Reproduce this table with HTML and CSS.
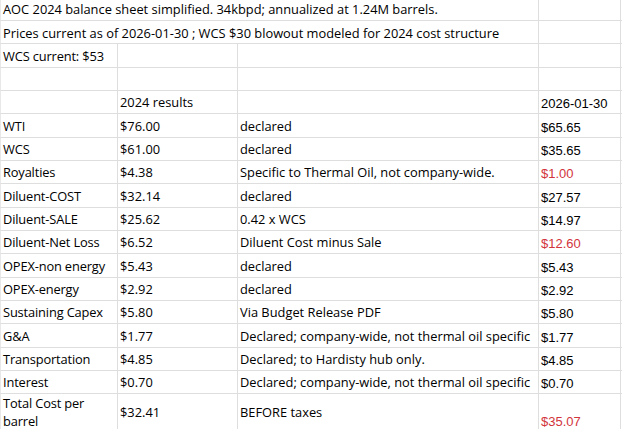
FILE: index.html
```html
<!DOCTYPE html>
<html>
<head>
<meta charset="utf-8">
<link rel="stylesheet" href="styles.css">
</head>
<body>
<div class="sheet">
  <div class="c a span3 first">AOC 2024 balance sheet simplified. 34kbpd; annualized at 1.24M barrels.</div>
  <div class="c d first"></div><div class="c e"></div>

  <div class="c a span3">Prices current as of 2026-01-30 ; WCS $30 blowout modeled for 2024 cost structure</div>
  <div class="c d"></div><div class="c e"></div>

  <div class="c a">WCS current: $53</div><div class="c"></div><div class="c"></div><div class="c d"></div><div class="c e"></div>

  <div class="c a"></div><div class="c"></div><div class="c"></div><div class="c d"></div><div class="c e"></div>

  <div class="c a"></div><div class="c">2024 results</div><div class="c"></div><div class="c d">2026-01-30</div><div class="c e"></div>

  <div class="c a">WTI</div><div class="c">$76.00</div><div class="c">declared</div><div class="c d">$65.65</div><div class="c e"></div>

  <div class="c a">WCS</div><div class="c">$61.00</div><div class="c">declared</div><div class="c d">$35.65</div><div class="c e"></div>

  <div class="c a">Royalties</div><div class="c">$4.38</div><div class="c">Specific to Thermal Oil, not company-wide.</div><div class="c d red">$1.00</div><div class="c e"></div>

  <div class="c a">Diluent-COST</div><div class="c">$32.14</div><div class="c">declared</div><div class="c d">$27.57</div><div class="c e"></div>

  <div class="c a">Diluent-SALE</div><div class="c">$25.62</div><div class="c">0.42 x WCS</div><div class="c d">$14.97</div><div class="c e"></div>

  <div class="c a">Diluent-Net Loss</div><div class="c">$6.52</div><div class="c">Diluent Cost minus Sale</div><div class="c d red">$12.60</div><div class="c e"></div>

  <div class="c a">OPEX-non energy</div><div class="c">$5.43</div><div class="c">declared</div><div class="c d">$5.43</div><div class="c e"></div>

  <div class="c a">OPEX-energy</div><div class="c">$2.92</div><div class="c">declared</div><div class="c d">$2.92</div><div class="c e"></div>

  <div class="c a">Sustaining Capex</div><div class="c">$5.80</div><div class="c">Via Budget Release PDF</div><div class="c d">$5.80</div><div class="c e"></div>

  <div class="c a">G&amp;A</div><div class="c">$1.77</div><div class="c">Declared; company-wide, not thermal oil specific</div><div class="c d">$1.77</div><div class="c e"></div>

  <div class="c a">Transportation</div><div class="c">$4.85</div><div class="c">Declared; to Hardisty hub only.</div><div class="c d">$4.85</div><div class="c e"></div>

  <div class="c a">Interest</div><div class="c">$0.70</div><div class="c">Declared; company-wide, not thermal oil specific</div><div class="c d">$0.70</div><div class="c e"></div>

  <div class="c a total-label">Total Cost per barrel</div><div class="c mid">$32.41</div><div class="c mid">BEFORE taxes</div><div class="c d low red">$35.07</div><div class="c e"></div>
</div>
</body>
</html>
```
FILE: styles.css
```css
html, body {
  margin: 0;
  padding: 0;
  background: #ffffff;
}

.sheet {
  display: grid;
  grid-template-columns: 118px 120px 301px 82px 1fr;
  grid-template-rows: 21px repeat(16, 23.333px) 40px;
  font-family: "Open Sans", "Noto Sans", sans-serif;
  font-size: 12.85px;
  color: #000000;
}

.c {
  box-sizing: border-box;
  border-right: 1px solid #dedede;
  border-bottom: 1px solid #dedede;
  padding: 3.5px 0 0 2px;
  line-height: 17px;
  white-space: nowrap;
  min-width: 0;
}

.a {
  border-left: 1px solid #e8e8e8;
  letter-spacing: -0.15px;
}

.span3 {
  grid-column: 1 / 4;
  letter-spacing: 0;
}

.first {
  padding-top: 1.2px;
}

.d {
  font-family: "Liberation Sans", Arial, sans-serif;
  font-size: 13px;
  padding-top: 4.5px;
}

.e {
  border-right: none;
  padding: 0;
}

.red {
  color: #d2343b;
}

.total-label {
  white-space: normal;
  padding-top: 0;
  line-height: 18px;
}

.mid {
  padding-top: 10.2px;
}

.low {
  padding-top: 18.7px;
}
```
